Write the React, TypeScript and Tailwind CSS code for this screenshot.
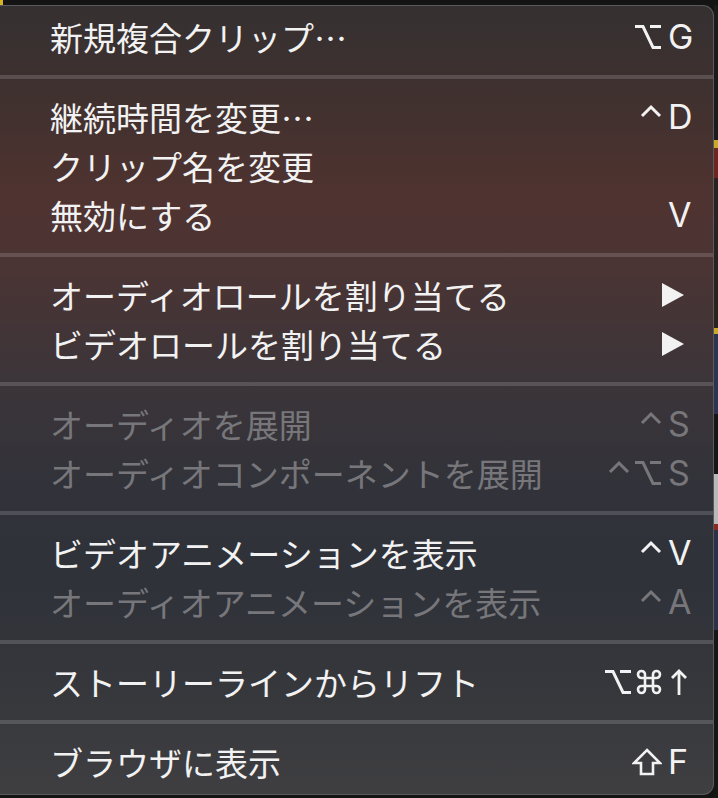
import React from "react";

type Mod = "ctrl" | "opt" | "cmd" | "shift";

interface Item {
  label: string;
  mods?: Mod[];
  keyChar?: string;
  arrowKey?: boolean;
  submenu?: boolean;
  disabled?: boolean;
}

const sections: Item[][] = [
  [{ label: "新規複合クリップ…", mods: ["opt"], keyChar: "G" }],
  [
    { label: "継続時間を変更…", mods: ["ctrl"], keyChar: "D" },
    { label: "クリップ名を変更" },
    { label: "無効にする", keyChar: "V" },
  ],
  [
    { label: "オーディオロールを割り当てる", submenu: true },
    { label: "ビデオロールを割り当てる", submenu: true },
  ],
  [
    { label: "オーディオを展開", mods: ["ctrl"], keyChar: "S", disabled: true },
    {
      label: "オーディオコンポーネントを展開",
      mods: ["ctrl", "opt"],
      keyChar: "S",
      disabled: true,
    },
  ],
  [
    { label: "ビデオアニメーションを表示", mods: ["ctrl"], keyChar: "V" },
    {
      label: "オーディオアニメーションを表示",
      mods: ["ctrl"],
      keyChar: "A",
      disabled: true,
    },
  ],
  [{ label: "ストーリーラインからリフト", mods: ["opt", "cmd"], arrowKey: true }],
  [{ label: "ブラウザに表示", mods: ["shift"], keyChar: "F" }],
];

const ModIcon = ({ mod }: { mod: Mod }) => {
  if (mod === "ctrl") {
    return (
      <svg width="22" height="26" viewBox="0 0 22 26" fill="none" stroke="currentColor" strokeWidth="3">
        <path d="M2 12 L11 3 L20 12" />
      </svg>
    );
  }
  if (mod === "opt") {
    return (
      <svg width="28" height="26" viewBox="0 0 28 26" fill="none" stroke="currentColor" strokeWidth="3">
        <path d="M1 2.5 H9 L19 23.5 H27" />
        <path d="M16 2.5 H27" />
      </svg>
    );
  }
  if (mod === "cmd") {
    return (
      <svg width="26" height="26" viewBox="0 0 26 26" fill="none" stroke="currentColor" strokeWidth="2.6">
        <path d="M9 9 V5.5 A3.5 3.5 0 1 0 5.5 9 H20.5 A3.5 3.5 0 1 0 17 5.5 V20.5 A3.5 3.5 0 1 0 20.5 17 H5.5 A3.5 3.5 0 1 0 9 20.5 Z" />
      </svg>
    );
  }
  return (
    <svg width="30" height="28" viewBox="0 0 30 28" fill="none" stroke="currentColor" strokeWidth="2.6">
      <path d="M15 2 L28 15 H21 V26 H9 V15 H2 Z" />
    </svg>
  );
};

const MenuRow = ({ item }: { item: Item }) => {
  const color = item.disabled ? "text-[#77777b]" : "text-[#f2f2f2]";
  return (
    <div className={`flex h-[49px] items-center justify-between pb-[5px] pl-[50px] pr-[19px] ${color}`}>
      <span className="text-[33px] leading-none whitespace-nowrap">{item.label}</span>
      {item.submenu ? (
        <svg width="24" height="26" viewBox="0 0 24 26" fill="currentColor" className="mr-[9px]">
          <polygon points="1,1 23,13 1,25" />
        </svg>
      ) : (
        <div className="flex items-center gap-[6px]">
          <div className="flex items-center gap-[4px]">
            {item.mods?.map((m, i) => (
              <ModIcon key={i} mod={m} />
            ))}
          </div>
          <div className="w-[26px] font-['Inter',sans-serif] text-[34px] leading-none">
            {item.arrowKey ? (
              <svg width="22" height="28" viewBox="0 0 22 28" fill="none" stroke="currentColor" strokeWidth="2.8">
                <path d="M11 27 V3" />
                <path d="M4 10 L11 3 L18 10" />
              </svg>
            ) : (
              item.keyChar
            )}
          </div>
        </div>
      )}
    </div>
  );
};

const App = () => {
  return (
    <div className="flex h-[798px] w-[718px] flex-col overflow-hidden bg-[#141414] font-['Noto_Sans_CJK_JP','Noto_Sans',sans-serif]">
      <div className="flex h-[5px] shrink-0">
        <div className="w-[3px] bg-[#d8b324]" />
      </div>
      <div className="flex flex-1">
        <div className="h-[790px] w-[714px] shrink-0 rounded-r-[11px] border border-l-0 border-[#5a5a5c] bg-[linear-gradient(180deg,#353031_0%,#40312f_12%,#4f3330_24%,#4b3434_33%,#3c3539_47%,#31323a_62%,#2f3239_74%,#37383c_88%,#3f3f42_100%)] pt-[9px] pb-[8px]">
          {sections.map((sec, si) => (
            <div key={si}>
              {si > 0 && (
                <div className="h-[31px] pt-[11px]">
                  <div className="h-[4px] bg-white/15" />
                </div>
              )}
              {sec.map((item, ii) => (
                <MenuRow key={ii} item={item} />
              ))}
            </div>
          ))}
        </div>
        <div className="flex flex-1 flex-col">
          <div className="h-[135px] bg-[#1b1b1b]" />
          <div className="h-[8px] bg-[#c9a82a]" />
          <div className="h-[30px] bg-[#6b2622]" />
          <div className="h-[150px] bg-[#2a2220]" />
          <div className="h-[6px] bg-[#c9a82a]" />
          <div className="h-[80px] bg-[#2b3550]" />
          <div className="h-[60px] bg-[#161616]" />
          <div className="h-[50px] bg-[#b9b9bb]" />
          <div className="h-[6px] bg-[#8a2a24]" />
          <div className="h-[100px] bg-[#2a3148]" />
          <div className="flex-1 bg-[#161616]" />
        </div>
      </div>
    </div>
  );
};

export default App;
